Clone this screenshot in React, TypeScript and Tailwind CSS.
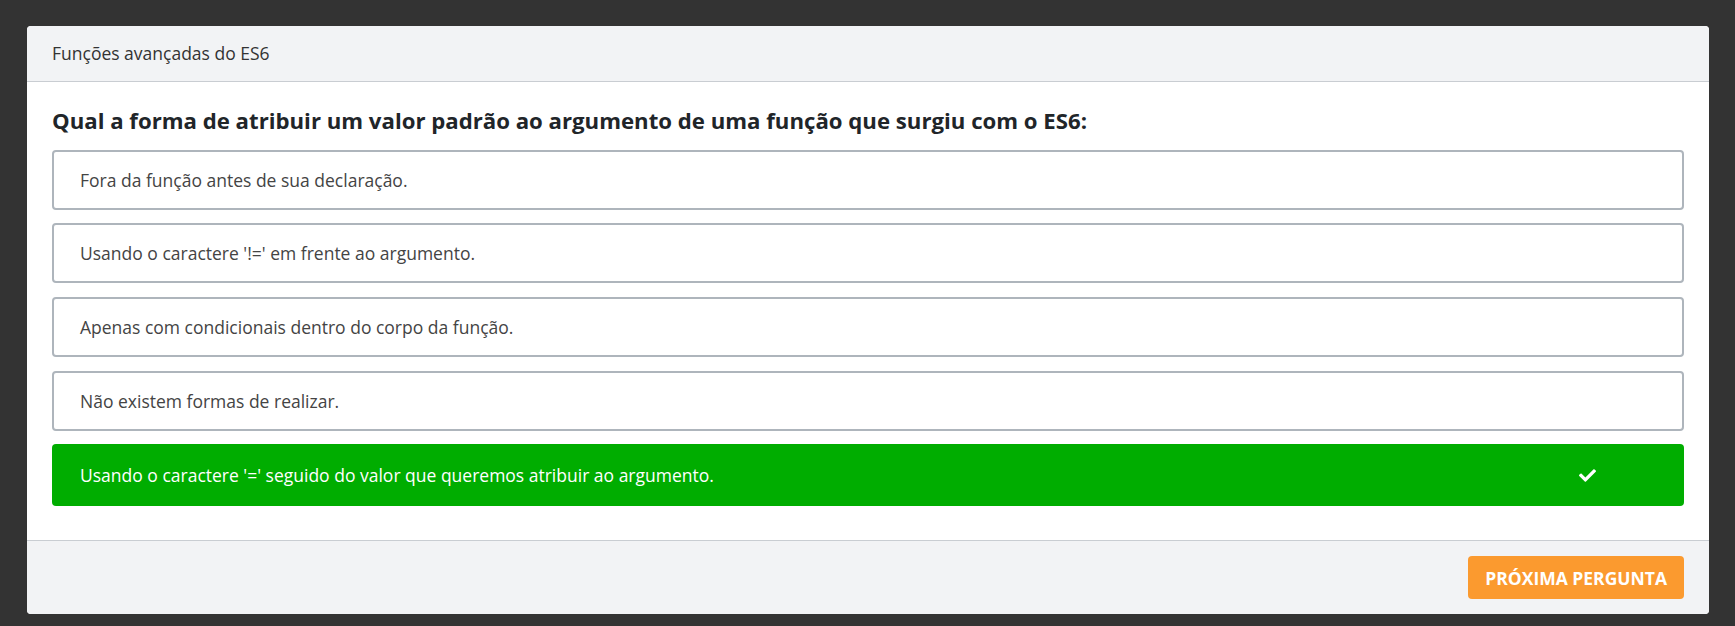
import { FaCheck } from "react-icons/fa";

interface OptionProps {
  text: string;
  correct?: boolean;
}

const Option = ({ text, correct = false }: OptionProps) => {
  if (correct) {
    return (
      <div className="flex h-[62px] items-center rounded-[4px] bg-[#00ad00] pl-[28px] pr-[88px] text-[17.5px] font-medium text-white">
        <span className="flex-1">{text}</span>
        <FaCheck size={17} />
      </div>
    );
  }
  return (
    <div className="flex h-[60px] items-center rounded-[4px] border-2 border-[#aeb5bc] bg-white pl-[26px] text-[17.5px] text-[#444]">
      {text}
    </div>
  );
};

const options = [
  "Fora da função antes de sua declaração.",
  "Usando o caractere '!=' em frente ao argumento.",
  "Apenas com condicionais dentro do corpo da função.",
  "Não existem formas de realizar.",
];

export default function App() {
  return (
    <div className="h-[626px] bg-[#333333] pt-[26px] pl-[27px] pr-[26px] font-['Open_Sans',sans-serif]">
      <div className="overflow-hidden rounded-[4px] bg-white">
        {/* cabeçalho */}
        <div className="flex h-[56px] items-center border-b border-[#c9cdd2] bg-[#f2f3f5] px-[25px] text-[17.5px] text-[#333]">
          Funções avançadas do ES6
        </div>

        {/* pergunta + alternativas */}
        <div className="flex flex-col gap-[13.7px] px-[25px] pt-[24px] pb-[34px]">
          <h2 className="text-[22.2px] leading-[30px] font-bold text-[#212529]">
            Qual a forma de atribuir um valor padrão ao argumento de uma função que surgiu com o ES6:
          </h2>
          {options.map((o) => (
            <Option key={o} text={o} />
          ))}
          <Option
            correct
            text="Usando o caractere '=' seguido do valor que queremos atribuir ao argumento."
          />
        </div>

        {/* rodapé */}
        <div className="flex h-[74px] items-center justify-end border-t border-[#c9cdd2] bg-[#f2f3f5] px-[25px]">
          <button className="h-[43px] rounded-[4px] bg-[#fb9a2f] px-[17px] text-[17.5px] font-bold uppercase text-white">
            Próxima pergunta
          </button>
        </div>
      </div>
    </div>
  );
}
